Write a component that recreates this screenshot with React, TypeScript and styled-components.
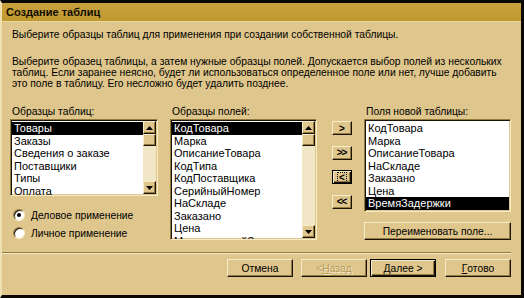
import React from 'react'
import styled, {createGlobalStyle, css} from 'styled-components'

const face = '#dfc68c'
const light = '#f7ecca'
const shadow = '#957a40'
const dark = '#1a1407'
const font = `"Liberation Sans", Arial, sans-serif`

const Global = createGlobalStyle`
  html, body { margin: 0; padding: 0; background: #000; }
  body { font-family: ${font}; font-size: 10.3px; color: #000; }
  * { box-sizing: border-box; }
`

const S = {
    Window: styled.div`
      width: 524px;
      height: 298px;
      display: flex;
      flex-direction: column;
      background: ${face};
      border-top: 3px solid #0b0803;
      border-right: 3px solid #0b0803;
      border-bottom: 3px solid #0b0803;
      border-left: 2px solid #efe0b4;
    `,
    TitleBar: styled.div`
      height: 19px;
      line-height: 19px;
      padding-left: 4px;
      background: linear-gradient(#c8a240, #bf982f);
      border-bottom: 1px solid #e9d59e;
      font-weight: bold;
      font-size: 11px;
      color: #120c00;
    `,
    Body: styled.div`
      flex: 1;
      display: flex;
      flex-direction: column;
      padding: 7px 10px 0 8px;
    `,
    Text: styled.p<{$gap?: number}>`
      margin: ${p => p.$gap ?? 0}px 0 0 0;
      padding-left: 2px;
      line-height: 11px;
      white-space: nowrap;
    `,
    Main: styled.div`
      display: flex;
      margin-top: 17px;
    `,
    Column: styled.div<{$w: number; $mr: number}>`
      width: ${p => p.$w}px;
      margin-right: ${p => p.$mr}px;
      display: flex;
      flex-direction: column;
    `,
    Label: styled.div`
      height: 11px;
      line-height: 11px;
      margin-bottom: 2px;
      padding-left: 2px;
      white-space: nowrap;
    `,
    ArrowColumn: styled.div`
      width: 20px;
      margin: 15px 12px 0 0;
      display: flex;
      flex-direction: column;
      gap: 10.5px;
    `,
    ListFrame: styled.div<{$h: number}>`
      height: ${p => p.$h}px;
      display: flex;
      background: #fff;
      border: 1px solid;
      border-color: ${shadow} ${light} ${light} ${shadow};
      box-shadow: inset 1px 1px 0 ${dark}, inset -1px -1px 0 ${face};
      padding: 1px;
      overflow: hidden;
      font-size: 11px;
    `,
    Rows: styled.div`
      flex: 1;
      min-width: 0;
      padding-top: 1px;
    `,
    Row: styled.div<{$sel?: boolean}>`
      height: 12.5px;
      line-height: 12.5px;
      padding-left: 2px;
      white-space: nowrap;
      background: ${p => (p.$sel ? '#000' : 'transparent')};
      color: ${p => (p.$sel ? '#fff' : '#000')};
    `,
    ScrollBar: styled.div`
      width: 13px;
      display: flex;
      flex-direction: column;
      background: #f1e6c6;
    `,
    ScrollPart: styled.div<{$h: number}>`
      height: ${p => p.$h}px;
      display: flex;
      align-items: center;
      justify-content: center;
      background: ${face};
      border: 1px solid;
      border-color: ${light} ${dark} ${dark} ${light};
      box-shadow: inset -1px -1px 0 ${shadow};
    `,
    Track: styled.div`
      flex: 1;
    `,
    Radios: styled.div`
      margin-top: 13px;
      display: flex;
      flex-direction: column;
      gap: 6px;
      padding-left: 3px;
    `,
    RadioRow: styled.label`
      display: flex;
      align-items: center;
      height: 12px;
      gap: 6px;
      white-space: nowrap;
    `,
    RadioDot: styled.span<{$on?: boolean}>`
      width: 12px;
      height: 12px;
      border-radius: 50%;
      background: #fff;
      border: 1px solid;
      border-color: ${shadow} ${light} ${light} ${shadow};
      box-shadow: inset 1px 1px 0 ${dark};
      display: flex;
      align-items: center;
      justify-content: center;
      &::after {
        content: '';
        width: 4px;
        height: 4px;
        border-radius: 50%;
        background: ${p => (p.$on ? '#000' : 'transparent')};
      }
    `,
    Separator: styled.div`
      margin: 12px 0 0 -8px;
      height: 2px;
      border-top: 1px solid ${shadow};
      border-bottom: 1px solid ${light};
    `,
    ButtonRow: styled.div`
      display: flex;
      justify-content: flex-end;
      margin-top: 5px;
    `,
    Button: styled.button<{$w?: number; $h?: number; $default?: boolean; $off?: boolean; $mr?: number}>`
      width: ${p => p.$w ?? 66}px;
      height: ${p => p.$h ?? 18}px;
      margin-right: ${p => p.$mr ?? 0}px;
      padding: 0;
      font-family: ${font};
      font-size: 10.3px;
      color: ${p => (p.$off ? '#b59a5c' : '#000')};
      text-shadow: ${p => (p.$off ? `1px 1px 0 ${light}` : 'none')};
      background: ${face};
      border: 1px solid;
      border-color: ${light} ${dark} ${dark} ${light};
      box-shadow: inset -1px -1px 0 ${shadow};
      display: flex;
      align-items: center;
      justify-content: center;
      ${p => p.$default && css`
        border-color: #000;
        box-shadow: inset 1px 1px 0 ${light}, inset -1px -1px 0 ${dark}, inset -2px -2px 0 ${shadow};
      `}
    `,
    Arrow: styled.span<{$focus?: boolean}>`
      font-size: 10px;
      font-weight: bold;
      letter-spacing: -1px;
      line-height: 9px;
      padding: 0 2px 0 1px;
      border: 1px dotted ${p => (p.$focus ? '#000' : 'transparent')};
    `,
}

function Triangle({up}: {up?: boolean}) {
    return (
        <svg width="7" height="4" viewBox="0 0 7 4">
            <path d={up ? 'M3.5 0 L7 4 L0 4 Z' : 'M0 0 L7 0 L3.5 4 Z'} fill="#000"/>
        </svg>
    )
}

function ListBox({items, selected, height, scroll}: {items: string[]; selected: number; height: number; scroll?: boolean}) {
    return (
        <S.ListFrame $h={height}>
            <S.Rows>
                {items.map((item, i) => (
                    <S.Row key={item} $sel={i === selected}>{item}</S.Row>
                ))}
            </S.Rows>
            {scroll && (
                <S.ScrollBar>
                    <S.ScrollPart $h={13}><Triangle up/></S.ScrollPart>
                    <S.ScrollPart $h={12}/>
                    <S.Track/>
                    <S.ScrollPart $h={13}><Triangle/></S.ScrollPart>
                </S.ScrollBar>
            )}
        </S.ListFrame>
    )
}

const tables = ['Товары', 'Заказы', 'Сведения о заказе', 'Поставщики', 'Типы', 'Оплата']
const fields = ['КодТовара', 'Марка', 'ОписаниеТовара', 'КодТипа', 'КодПоставщика', 'СерийныйНомер', 'НаСкладе', 'Заказано', 'Цена', 'МинимальныйЗапас']
const newFields = ['КодТовара', 'Марка', 'ОписаниеТовара', 'НаСкладе', 'Заказано', 'Цена', 'ВремяЗадержки']

export default function App() {
    return (
        <>
            <Global/>
            <S.Window>
                <S.TitleBar>Создание таблиц</S.TitleBar>
                <S.Body>
                    <S.Text>Выберите образцы таблиц для применения при создании собственной таблицы.</S.Text>
                    <S.Text $gap={16}>
                        Выберите образец таблицы, а затем нужные образцы полей. Допускается выбор полей из нескольких<br/>
                        таблиц. Если заранее неясно, будет ли использоваться определенное поле или нет, лучше добавить<br/>
                        это поле в таблицу. Его несложно будет удалить позднее.
                    </S.Text>
                    <S.Main>
                        <S.Column $w={148} $mr={12}>
                            <S.Label>Образцы таблиц:</S.Label>
                            <ListBox items={tables} selected={0} height={77} scroll/>
                            <S.Radios>
                                <S.RadioRow><S.RadioDot $on/>Деловое применение</S.RadioRow>
                                <S.RadioRow><S.RadioDot/>Личное применение</S.RadioRow>
                            </S.Radios>
                        </S.Column>
                        <S.Column $w={147} $mr={15}>
                            <S.Label>Образцы полей:</S.Label>
                            <ListBox items={fields} selected={0} height={121} scroll/>
                        </S.Column>
                        <S.ArrowColumn>
                            <S.Button $w={20} $h={14}><S.Arrow>&gt;</S.Arrow></S.Button>
                            <S.Button $w={20} $h={14}><S.Arrow>&gt;&gt;</S.Arrow></S.Button>
                            <S.Button $w={20} $h={14} $default><S.Arrow $focus>&lt;</S.Arrow></S.Button>
                            <S.Button $w={20} $h={14}><S.Arrow>&lt;&lt;</S.Arrow></S.Button>
                        </S.ArrowColumn>
                        <S.Column $w={147} $mr={0}>
                            <S.Label>Поля новой таблицы:</S.Label>
                            <ListBox items={newFields} selected={6} height={93}/>
                            <S.Button $w={147} style={{marginTop: 10}}>Переименовать поле...</S.Button>
                        </S.Column>
                    </S.Main>
                    <S.Separator/>
                    <S.ButtonRow>
                        <S.Button $mr={8}>Отмена</S.Button>
                        <S.Button $off $mr={3}>&lt; <u>Н</u>азад</S.Button>
                        <S.Button $default $mr={9}><u>Д</u>алее &gt;</S.Button>
                        <S.Button><u>Г</u>отово</S.Button>
                    </S.ButtonRow>
                </S.Body>
            </S.Window>
        </>
    )
}
